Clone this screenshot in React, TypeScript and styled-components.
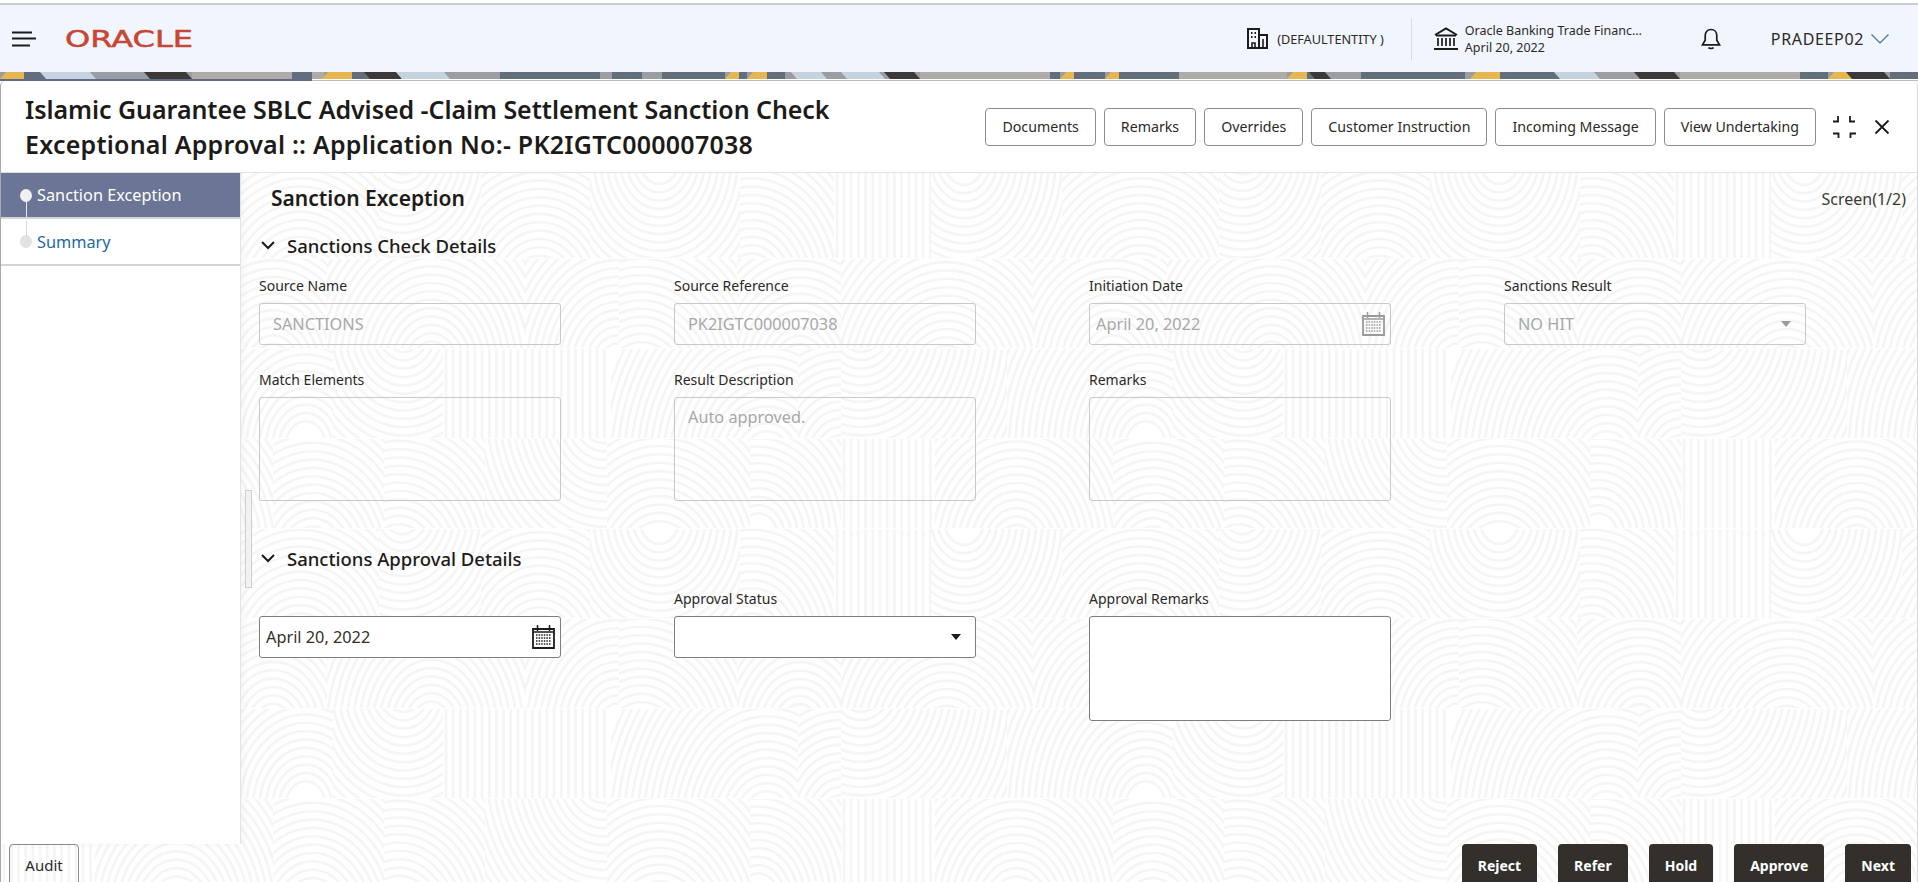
import React from "react";
import styled, { createGlobalStyle } from "styled-components";

/* ---------- decorative tile: patchwork of arcs ---------- */
function buildTile(): string {
  let seed = 23;
  const rnd = () => {
    seed = (seed * 16807) % 2147483647;
    return seed / 2147483647;
  };
  const W = 840;
  const H = 360;
  const rowH = 90;
  let defs = "";
  let body = "";
  let id = 0;
  for (let r = 0; r < 4; r++) {
    let x = 0;
    while (x < W) {
      const w = Math.min(W - x, 90 + Math.floor(rnd() * 110));
      const y = r * rowH;
      const cid = `c${id++}`;
      defs += `<clipPath id="${cid}"><rect x="${x}" y="${y}" width="${w}" height="${rowH - 1}"/></clipPath>`;
      let g = "";
      if (rnd() < 0.1) {
        for (let lx = x + 3; lx < x + w; lx += 7.2) {
          g += `<path d="M${lx.toFixed(1)} ${y}v${rowH}"/>`;
        }
      } else {
        const cx = x + rnd() * w;
        const below = rnd() > 0.25;
        const cy = below ? y + rowH + 8 + rnd() * 40 : y - 8 - rnd() * 30;
        for (let rad = 24; rad < 200; rad += 7.6) {
          g += `<ellipse cx="${cx.toFixed(1)}" cy="${cy.toFixed(1)}" rx="${(rad * 0.85).toFixed(1)}" ry="${(rad * 1.1).toFixed(1)}"/>`;
        }
      }
      body += `<g clip-path="url(#${cid})">${g}</g>`;
      x += w;
    }
  }
  const svg = `<svg xmlns="http://www.w3.org/2000/svg" width="${W}" height="${H}" viewBox="0 0 ${W} ${H}"><defs>${defs}</defs><g fill="none" stroke="#f5f5f5" stroke-width="2.6">${body}</g></svg>`;
  return `data:image/svg+xml,${encodeURIComponent(svg)}`;
}
const tile = buildTile();

/* ---------- banner strip data ---------- */
const Y = "#e6b651";
const S = "#626f7b";
const L = "#c5d3de";
const G = "#9a9ea3";
const D = "#3c3936";
const B = "#afaca8";
const bands: [number, number, string][] = [
  [0, 24, Y], [24, 22, S], [46, 50, L], [96, 50, G], [150, 42, D], [192, 100, B], [292, 20, S],
  [312, 12, B], [322, 30, Y], [352, 18, S], [370, 32, D], [402, 48, L], [450, 50, G], [500, 100, S],
  [600, 12, G], [612, 30, S], [642, 20, G], [662, 63, S], [725, 14, Y], [739, 8, S], [747, 20, Y],
  [767, 18, S], [785, 12, G], [797, 30, L], [827, 20, G], [847, 38, L], [885, 5, G], [890, 30, D],
  [920, 130, B], [1050, 10, S], [1060, 14, Y], [1074, 21, S], [1095, 10, S], [1105, 14, Y], [1119, 60, S],
  [1179, 108, B], [1287, 20, Y], [1307, 10, S], [1315, 16, D], [1331, 30, G], [1361, 104, S],
  [1465, 5, G], [1470, 30, Y], [1500, 60, S], [1560, 40, L], [1600, 40, G], [1640, 40, D],
  [1680, 120, B], [1800, 28, S], [1828, 24, Y], [1852, 38, D], [1890, 28, S],
];

/* ---------- global ---------- */
const Global = createGlobalStyle`
  html, body { margin: 0; padding: 0; height: 100%; overflow: hidden; background: #fff; }
  * { box-sizing: border-box; }
  body { font-family: "Noto Sans", "Open Sans", sans-serif; color: #2b2926; }
`;

const Page = styled.div`
  width: 1918px;
  height: 882px;
  display: flex;
  flex-direction: column;
  overflow: hidden;
  padding-top: 3px;
`;

/* ---------- top bar ---------- */
const TopBar = styled.header`
  height: 69px;
  flex: none;
  display: flex;
  align-items: center;
  background: #f1f5fd;
  border-top: 2px solid #cccccc;
  padding-right: 29px;
`;
const MenuButton = styled.div`
  display: flex;
  margin-left: 12px;
`;
const LogoWrap = styled.div`
  display: flex;
  margin-left: 29px;
`;
const TopRight = styled.div`
  margin-left: auto;
  display: flex;
  align-items: center;
`;
const EntityText = styled.span`
  font-size: 12.7px;
  margin-left: 9px;
  color: #2b2926;
  white-space: nowrap;
`;
const TopDivider = styled.div`
  width: 1px;
  height: 42px;
  background: #d8dadf;
  margin: 0 22px 0 27px;
`;
const BranchText = styled.div`
  margin-left: 7px;
  width: 180px;
  font-size: 12.5px;
  line-height: 17px;
  white-space: nowrap;
`;
const BranchLine = styled.div`
  display: block;
`;
const BellWrap = styled.div`
  display: flex;
  margin-left: 56px;
`;
const UserName = styled.span`
  font-size: 16px;
  margin-left: 50px;
  white-space: nowrap;
  letter-spacing: 0.65px;
`;
const UserChevron = styled.div`
  display: flex;
  margin-left: 7px;
`;

const Strip = styled.svg`
  display: block;
  flex: none;
  width: 1918px;
  height: 7px;
  background: #9a9ea3;
`;
const LoadRule = styled.div`
  flex: none;
  height: 2px;
  display: flex;
  background: #fff;
`;
const LoadDone = styled.div`
  width: 312px;
  background: #5f6a8c;
`;
const LoadRest = styled.div`
  flex: 1;
  margin-top: 1px;
  background: #bdbdbd;
`;

/* ---------- panel ---------- */
const Panel = styled.div`
  flex: 1;
  min-height: 0;
  display: flex;
  flex-direction: column;
  background: #fff;
  border-left: 1px solid #a9a9a9;
  border-right: 1px solid #dddddd;
  border-radius: 5px 5px 0 0;
`;
const PanelHeader = styled.div`
  height: 92px;
  flex: none;
  display: flex;
  align-items: center;
  padding-left: 24px;
  padding-right: 27px;
  border-bottom: 1px solid #e3e3e3;
`;
const Title = styled.h1`
  margin: 1px 0 0;
  font-size: 25px;
  line-height: 35px;
  font-weight: 600;
  color: #1d1b19;
  white-space: nowrap;
`;
const TitleLine = styled.span<{ $track: number }>`
  display: block;
  letter-spacing: ${(p) => p.$track}px;
`;
const Actions = styled.div`
  margin-left: auto;
  display: flex;
  align-items: center;
  gap: 8px;
`;
const OutlineButton = styled.button`
  height: 38px;
  padding: 0 16px;
  font-family: inherit;
  font-size: 14.2px;
  color: #2b2926;
  background: #fff;
  border: 1px solid #8d8d8d;
  border-radius: 4px;
  white-space: nowrap;
`;
const IconButton = styled.div<{ $gap: number }>`
  display: flex;
  margin-left: ${(p) => p.$gap}px;
`;

const PanelBody = styled.div`
  flex: 1;
  min-height: 0;
  display: flex;
  flex-direction: column;
  background-color: #fff;
  background-image: url("${tile}");
  background-position: 0 -4px;
`;
const Main = styled.div`
  flex: 1;
  min-height: 0;
  display: flex;
  position: relative;
`;

/* ---------- side nav ---------- */
const Sidebar = styled.nav`
  width: 240px;
  flex: none;
  background: #fff;
  border-right: 1px solid #dfe4f0;
  box-shadow: 3px 0 7px rgba(0, 0, 0, 0.035);
`;
const NavItem = styled.div<{ $active?: boolean }>`
  position: relative;
  height: ${(p) => (p.$active ? "46px" : "47px")};
  display: flex;
  align-items: center;
  padding-left: 19px;
  font-size: 16.3px;
  background: ${(p) => (p.$active ? "#6b7595" : "#fff")};
  color: ${(p) => (p.$active ? "#fff" : "#1c6aa5")};
  border-bottom: 2px solid #d4d4d4;
`;
const NavDot = styled.span<{ $active?: boolean }>`
  width: 12px;
  height: 13px;
  border-radius: 50%;
  background: ${(p) => (p.$active ? "#f1f1f1" : "#e2e2e2")};
  margin-right: 5px;
`;
const NavLine = styled.span<{ $place: "down" | "up" }>`
  position: absolute;
  left: 25px;
  width: 1px;
  height: 15px;
  background: ${(p) => (p.$place === "down" ? "#e8e8e8" : "#d9d9d9")};
  ${(p) => (p.$place === "down" ? "top: 29px;" : "top: 2px;")}
`;

/* ---------- content ---------- */
const Content = styled.main`
  flex: 1;
  min-width: 0;
  padding: 12px 11px 0 18px;
`;
const PageTitleRow = styled.div`
  display: flex;
  align-items: center;
  justify-content: space-between;
  height: 26px;
  padding-left: 12px;
`;
const PageTitle = styled.h2`
  margin: 0;
  font-size: 21px;
  font-weight: 600;
  color: #1d1b19;
`;
const ScreenCount = styled.span`
  font-size: 16px;
  padding-top: 2px;
  color: #3b3936;
`;
const SectionHead = styled.div<{ $top: number }>`
  display: flex;
  align-items: center;
  height: 24px;
  margin-top: ${(p) => p.$top}px;
  padding-left: 2px;
`;
const SectionTitle = styled.h3`
  margin: 0 0 0 12px;
  font-size: 18.5px;
  font-weight: 500;
  color: #1d1b19;
`;
const FormGrid = styled.div<{ $top: number }>`
  display: grid;
  grid-template-columns: repeat(4, 302px);
  column-gap: 113px;
  row-gap: 25px;
  margin-top: ${(p) => p.$top}px;
`;
const Field = styled.div`
  display: flex;
  flex-direction: column;
  align-items: stretch;
`;
const FieldLabel = styled.label`
  font-size: 14px;
  line-height: 20px;
  height: 20px;
  margin-bottom: 7px;
  color: #2b2926;
`;
const Control = styled.div<{ $off?: boolean; $tight?: boolean }>`
  height: 42px;
  display: flex;
  align-items: center;
  justify-content: space-between;
  padding: 0 ${(p) => (p.$tight ? "5px" : "13px")} 0 ${(p) => (p.$tight ? "6px" : "13px")};
  font-size: 16.3px;
  color: ${(p) => (p.$off ? "#a8a8a8" : "#33302c")};
  background: ${(p) => (p.$off ? "transparent" : "#fff")};
  border: 1px solid ${(p) => (p.$off ? "#c9c9c9" : "#807d7a")};
  border-radius: 3px;
`;
const TextBlock = styled.div<{ $off?: boolean }>`
  height: ${(p) => (p.$off ? "104px" : "105px")};
  padding: 8px 13px;
  font-size: 16.3px;
  line-height: 22px;
  color: #a8a8a8;
  background: ${(p) => (p.$off ? "transparent" : "#fff")};
  border: 1px solid ${(p) => (p.$off ? "#c9c9c9" : "#807d7a")};
  border-radius: 3px;
`;
const Caret = styled.span<{ $off?: boolean }>`
  width: 0;
  height: 0;
  margin-right: 1px;
  margin-bottom: 1px;
  border-left: 5.5px solid transparent;
  border-right: 5.5px solid transparent;
  border-top: 6.5px solid ${(p) => (p.$off ? "#9a9a9a" : "#1d1b19")};
`;
const ScrollHandle = styled.div`
  position: absolute;
  left: 244px;
  top: 317px;
  width: 7px;
  height: 98px;
  background: #f2f2f2;
  border: 1px solid #cfcfcf;
`;

/* ---------- footer ---------- */
const Footer = styled.footer`
  height: 38px;
  flex: none;
  display: flex;
  justify-content: space-between;
  padding: 0 6px 0 8px;
`;
const AuditButton = styled.button`
  width: 70px;
  height: 42px;
  font-family: inherit;
  font-size: 15px;
  color: #2b2926;
  background: transparent;
  border: 1px solid #8d8d8d;
  border-radius: 4px;
`;
const FooterActions = styled.div`
  display: flex;
  gap: 21px;
`;
const DarkButton = styled.button`
  height: 42px;
  padding: 0 16px;
  font-family: inherit;
  font-size: 14px;
  font-weight: 700;
  color: #fff;
  background: #33302c;
  border: none;
  border-radius: 4px;
`;

/* ---------- icons ---------- */
const Hamburger = () => (
  <svg width="24" height="16" viewBox="0 0 24 16">
    <g stroke="#1d1b19" strokeWidth="2">
      <path d="M0 1.5h20" />
      <path d="M0 7.5h24" />
      <path d="M0 14.5h18" />
    </g>
  </svg>
);
const Logo = () => (
  <svg width="136" height="26" viewBox="0 0 136 26">
    <text
      x="0"
      y="21"
      textLength="128"
      lengthAdjust="spacingAndGlyphs"
      fontFamily="'DejaVu Sans', sans-serif"
      fontSize="23"
      fontWeight="400"
      fill="#c74634"
      stroke="#c74634"
      strokeWidth="0.5"
    >
      ORACLE
    </text>
  </svg>
);
const BuildingIcon = () => (
  <svg width="21" height="21" viewBox="0 0 21 21" fill="none" stroke="#1d1b19" strokeWidth="2">
    <path d="M1 20V1h11v19M12 7h8v13M0 20h21" />
    <path d="M5 20v-5h3v5M16 11v9" strokeWidth="1.6" />
    <path d="M4 5h1.5M7.5 5H9M4 9h1.5M7.5 9H9" strokeWidth="1.8" />
  </svg>
);
const BankIcon = () => (
  <svg width="24" height="23" viewBox="0 0 24 23" fill="none" stroke="#1d1b19">
    <path d="M1 8 12 1.5 23 8" strokeWidth="2" />
    <path d="M2 8.5h20" strokeWidth="2" />
    <path d="M4 11v8M8 11v8M12 11v8M16 11v8M20 11v8" strokeWidth="1.7" />
    <path d="M0 22h24" strokeWidth="2" />
  </svg>
);
const BellIcon = () => (
  <svg width="20" height="22" viewBox="0 0 20 22" fill="none" stroke="#1d1b19" strokeWidth="1.7">
    <path d="M10 1.5c-3.6 0-5.8 2.6-5.8 6.2v4.6L1.5 16.8h17l-2.7-4.5V7.7C15.800 4.100 13.600 1.500 10 1.500Z" />
    <path d="M7.500 19.500c.8 1.300 4.200 1.300 5 0" />
  </svg>
);
const ThinChevron = () => (
  <svg width="18" height="10" viewBox="0 0 18 10" fill="none" stroke="#3b6f96" strokeWidth="1.1">
    <path d="M.5.500 9 9l8.500-8.500" />
  </svg>
);
const Collapse = () => (
  <svg width="24" height="22" viewBox="0 0 24 22" fill="none" stroke="#1d1b19" strokeWidth="1.800">
    <path d="M1 5.500h5V0M18 0v5.500h5M1 17.500h5.500V22M24 17.500h-5.500V22" />
  </svg>
);
const CloseIcon = () => (
  <svg width="16" height="16" viewBox="0 0 16 16" fill="none" stroke="#1d1b19" strokeWidth="1.800">
    <path d="M1.500 1.500l13 13M14.500 1.500l-13 13" />
  </svg>
);
const SectionChevron = () => (
  <svg width="14" height="9" viewBox="0 0 14 9" fill="none" stroke="#1d1b19" strokeWidth="2">
    <path d="M1 1l6 6 6-6" />
  </svg>
);
const CalendarIcon = ({ color }: { color: string }) => (
  <svg width="23" height="24" viewBox="0 0 23 24" fill="none" stroke={color}>
    <path d="M1 4h21v19H1z" strokeWidth="1.800" />
    <path d="M1 7h21" strokeWidth="1.500" />
    <path d="M5.500 0v6M17.500 0v6" strokeWidth="1.500" />
    <path d="M4 10h15M4 13h15M4 16h15M4 19h15" strokeWidth="1.500" strokeDasharray="1.500 1.100" />
  </svg>
);

export default function App() {
  return (
    <Page>
      <Global />
      <TopBar>
        <MenuButton>
          <Hamburger />
        </MenuButton>
        <LogoWrap>
          <Logo />
        </LogoWrap>
        <TopRight>
          <BuildingIcon />
          <EntityText>(DEFAULTENTITY )</EntityText>
          <TopDivider />
          <BankIcon />
          <BranchText>
            <BranchLine>Oracle Banking Trade Financ…</BranchLine>
            <BranchLine>April 20, 2022</BranchLine>
          </BranchText>
          <BellWrap>
            <BellIcon />
          </BellWrap>
          <UserName>PRADEEP02</UserName>
          <UserChevron>
            <ThinChevron />
          </UserChevron>
        </TopRight>
      </TopBar>

      <Strip viewBox="0 0 1918 7" preserveAspectRatio="none">
        {bands.map(([x, w, c], i) => {
          const s = c === D || c === L ? -6 : c === Y ? 6 : 0;
          return <polygon key={i} points={`${x + s},0 ${x + w + s},0 ${x + w},7 ${x},7`} fill={c} />;
        })}
      </Strip>
      <LoadRule>
        <LoadDone />
        <LoadRest />
      </LoadRule>

      <Panel>
        <PanelHeader>
          <Title>
            <TitleLine $track={-0.05}>Islamic Guarantee SBLC Advised -Claim Settlement Sanction Check</TitleLine>
            <TitleLine $track={0.22}>Exceptional Approval :: Application No:- PK2IGTC000007038</TitleLine>
          </Title>
          <Actions>
            <OutlineButton>Documents</OutlineButton>
            <OutlineButton>Remarks</OutlineButton>
            <OutlineButton>Overrides</OutlineButton>
            <OutlineButton>Customer Instruction</OutlineButton>
            <OutlineButton>Incoming Message</OutlineButton>
            <OutlineButton>View Undertaking</OutlineButton>
            <IconButton $gap={8}>
              <Collapse />
            </IconButton>
            <IconButton $gap={10}>
              <CloseIcon />
            </IconButton>
          </Actions>
        </PanelHeader>

        <PanelBody>
          <Main>
            <Sidebar>
              <NavItem $active>
                <NavDot $active />
                <NavLine $place="down" />
                Sanction Exception
              </NavItem>
              <NavItem>
                <NavLine $place="up" />
                <NavDot />
                Summary
              </NavItem>
            </Sidebar>
            <Content>
              <ScrollHandle />
              <PageTitleRow>
                <PageTitle>Sanction Exception</PageTitle>
                <ScreenCount>Screen(1/2)</ScreenCount>
              </PageTitleRow>

              <SectionHead $top={22}>
                <SectionChevron />
                <SectionTitle>Sanctions Check Details</SectionTitle>
              </SectionHead>
              <FormGrid $top={19}>
                <Field>
                  <FieldLabel>Source Name</FieldLabel>
                  <Control $off>SANCTIONS</Control>
                </Field>
                <Field>
                  <FieldLabel>Source Reference</FieldLabel>
                  <Control $off>PK2IGTC000007038</Control>
                </Field>
                <Field>
                  <FieldLabel>Initiation Date</FieldLabel>
                  <Control $off $tight>
                    April 20, 2022
                    <CalendarIcon color="#9a9a9a" />
                  </Control>
                </Field>
                <Field>
                  <FieldLabel>Sanctions Result</FieldLabel>
                  <Control $off>
                    NO HIT
                    <Caret $off />
                  </Control>
                </Field>
                <Field>
                  <FieldLabel>Match Elements</FieldLabel>
                  <TextBlock $off />
                </Field>
                <Field>
                  <FieldLabel>Result Description</FieldLabel>
                  <TextBlock $off>Auto approved.</TextBlock>
                </Field>
                <Field>
                  <FieldLabel>Remarks</FieldLabel>
                  <TextBlock $off />
                </Field>
              </FormGrid>

              <SectionHead $top={45}>
                <SectionChevron />
                <SectionTitle>Sanctions Approval Details</SectionTitle>
              </SectionHead>
              <FormGrid $top={19}>
                <Field>
                  <FieldLabel />
                  <Control $tight>
                    April 20, 2022
                    <CalendarIcon color="#1d1b19" />
                  </Control>
                </Field>
                <Field>
                  <FieldLabel>Approval Status</FieldLabel>
                  <Control>
                    <span />
                    <Caret />
                  </Control>
                </Field>
                <Field>
                  <FieldLabel>Approval Remarks</FieldLabel>
                  <TextBlock />
                </Field>
              </FormGrid>
            </Content>
          </Main>
          <Footer>
            <AuditButton>Audit</AuditButton>
            <FooterActions>
              <DarkButton>Reject</DarkButton>
              <DarkButton>Refer</DarkButton>
              <DarkButton>Hold</DarkButton>
              <DarkButton>Approve</DarkButton>
              <DarkButton>Next</DarkButton>
            </FooterActions>
          </Footer>
        </PanelBody>
      </Panel>
    </Page>
  );
}
